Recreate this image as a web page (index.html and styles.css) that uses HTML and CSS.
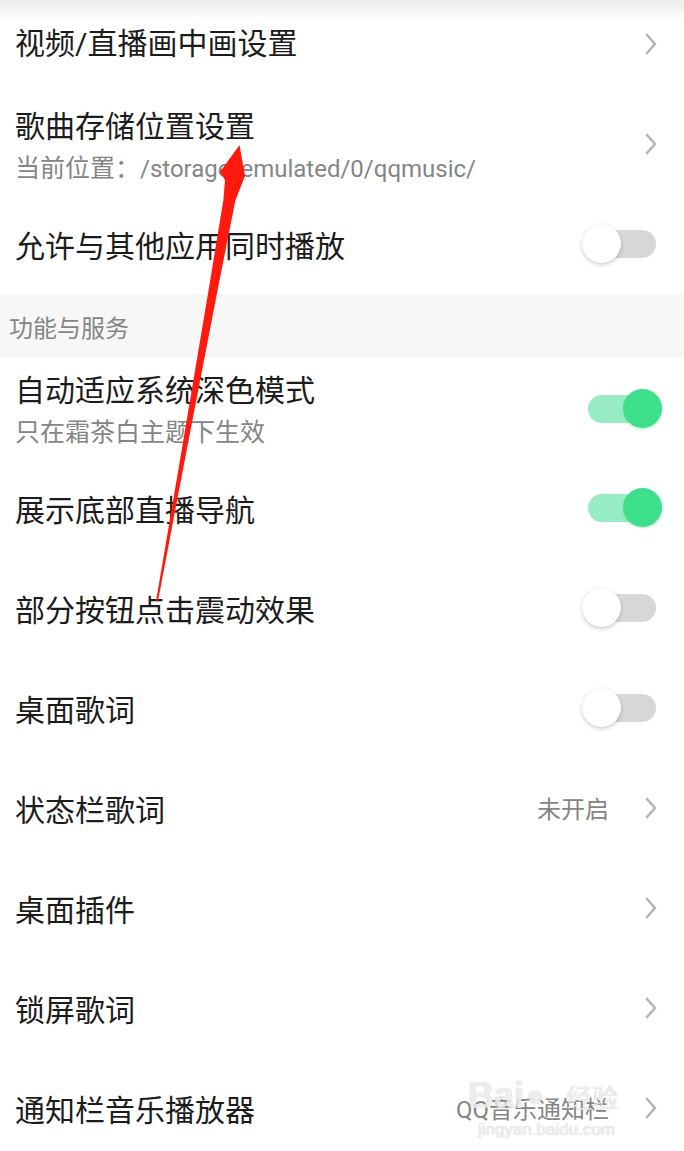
FILE: index.html
```html
<!DOCTYPE html>
<html lang="zh-CN">
<head>
<meta charset="utf-8">
<title>设置</title>
<link rel="stylesheet" href="styles.css">
</head>
<body>
<div class="page">
  <div class="list">
    <div class="row first">
      <div class="text"><div class="title">视频/直播画中画设置</div></div>
      <svg class="chev" width="14" height="22" viewBox="0 0 14 22"><path d="M3 2 L11 11 L3 20" /></svg>
    </div>
    <div class="row">
      <div class="text">
        <div class="title">歌曲存储位置设置</div>
        <div class="sub">当前位置：<span class="latin">/storage/emulated/0/qqmusic/</span></div>
      </div>
      <svg class="chev" width="14" height="22" viewBox="0 0 14 22"><path d="M3 2 L11 11 L3 20" /></svg>
    </div>
    <div class="row">
      <div class="text"><div class="title">允许与其他应用同时播放</div></div>
      <div class="toggle"><span class="track"></span><span class="thumb"></span></div>
    </div>
    <div class="section">功能与服务</div>
    <div class="row tall">
      <div class="text">
        <div class="title">自动适应系统深色模式</div>
        <div class="sub">只在霜茶白主题下生效</div>
      </div>
      <div class="toggle on"><span class="track"></span><span class="thumb"></span></div>
    </div>
    <div class="row">
      <div class="text"><div class="title">展示底部直播导航</div></div>
      <div class="toggle on"><span class="track"></span><span class="thumb"></span></div>
    </div>
    <div class="row">
      <div class="text"><div class="title">部分按钮点击震动效果</div></div>
      <div class="toggle"><span class="track"></span><span class="thumb"></span></div>
    </div>
    <div class="row">
      <div class="text"><div class="title">桌面歌词</div></div>
      <div class="toggle"><span class="track"></span><span class="thumb"></span></div>
    </div>
    <div class="row">
      <div class="text"><div class="title">状态栏歌词</div></div>
      <span class="value">未开启</span>
      <svg class="chev" width="14" height="22" viewBox="0 0 14 22"><path d="M3 2 L11 11 L3 20" /></svg>
    </div>
    <div class="row">
      <div class="text"><div class="title">桌面插件</div></div>
      <svg class="chev" width="14" height="22" viewBox="0 0 14 22"><path d="M3 2 L11 11 L3 20" /></svg>
    </div>
    <div class="row">
      <div class="text"><div class="title">锁屏歌词</div></div>
      <svg class="chev" width="14" height="22" viewBox="0 0 14 22"><path d="M3 2 L11 11 L3 20" /></svg>
    </div>
    <div class="row">
      <div class="text"><div class="title">通知栏音乐播放器</div></div>
      <span class="value">QQ音乐通知栏</span>
      <svg class="chev" width="14" height="22" viewBox="0 0 14 22"><path d="M3 2 L11 11 L3 20" /></svg>
    </div>
  </div>

  <div class="topshade"></div>

  <div class="watermark">
    <div class="wm-top"><span class="wm-bai">Bai</span><span class="wm-paw">●</span><span class="wm-jy">经验</span></div>
    <div class="wm-url">jingyan.baidu.com</div>
  </div>

  <svg class="arrow" width="684" height="1151" viewBox="0 0 684 1151">
    <polygon points="239.5,145 245,176 235.5,200 217.6,290 186.7,450 157.8,602 156.2,600 181.7,450 208.6,290 223.4,200 225,180 220,172" />
  </svg>
</div>
</body>
</html>
```

FILE: styles.css
```css
* {
  box-sizing: border-box;
}

html, body {
  margin: 0;
  padding: 0;
  background: #ffffff;
}

body {
  font-family: Roboto, "Noto Sans CJK SC", "Noto Sans", sans-serif;
  color: #1c1c1c;
}

.page {
  position: relative;
  width: 684px;
  height: 1151px;
  overflow: hidden;
  background: #ffffff;
}

.list {
  display: flex;
  flex-direction: column;
}

.row {
  display: flex;
  align-items: center;
  height: 100px;
  padding: 0 28px 0 15px;
}

.row .text {
  padding-top: 5px;
}

.row.first {
  height: 94px;
  padding-bottom: 7px;
}

.row.first .text {
  padding-top: 0;
}

.row.tall {
  height: 101px;
}

.text {
  flex: 1;
  min-width: 0;
}

.title {
  font-size: 30px;
  line-height: 36px;
  color: #1c1c1c;
  white-space: nowrap;
}

.sub {
  margin-top: 9px;
  font-size: 25px;
  line-height: 30px;
  color: #858585;
  white-space: nowrap;
}

.sub .latin {
  font-size: 24px;
}

.value {
  font-size: 24px;
  line-height: 30px;
  color: #858585;
  margin-right: 35px;
  padding-top: 3px;
}

.chev {
  flex: none;
  margin-right: -2px;
}

.chev path {
  fill: none;
  stroke: #b4b4b4;
  stroke-width: 2.6;
  stroke-linecap: round;
  stroke-linejoin: round;
}

.section {
  height: 63px;
  display: flex;
  align-items: center;
  padding-left: 9px;
  padding-top: 2px;
  background: #f7f7f7;
  font-size: 24px;
  color: #858585;
}

.toggle {
  position: relative;
  flex: none;
  width: 81px;
  height: 40px;
  margin-right: -6px;
}

.row.tall .toggle {
  margin-top: 2px;
}

.track {
  position: absolute;
  left: 7px;
  top: 6px;
  width: 68px;
  height: 28px;
  border-radius: 14px;
  background: #d7d7d7;
}

.thumb {
  position: absolute;
  left: 1px;
  top: 0;
  width: 39px;
  height: 39px;
  border-radius: 50%;
  background: #ffffff;
  box-shadow: 0 2px 4px rgba(0, 0, 0, 0.18), 0 0 1px rgba(0, 0, 0, 0.12);
}

.toggle.on .track {
  background: #98ecc3;
}

.toggle.on .thumb {
  left: 42px;
  background: #3ddf8c;
  box-shadow: 0 1px 3px rgba(61, 223, 140, 0.35);
}

.topshade {
  position: absolute;
  left: 0;
  top: 0;
  width: 684px;
  height: 19px;
  background: linear-gradient(#ececec, #f5f5f5 60%, rgba(255, 255, 255, 0));
}

.watermark {
  position: absolute;
  left: 468px;
  top: 1074px;
  width: 204px;
  color: rgba(255, 255, 255, 0.8);
  text-shadow: 0 0 1px rgba(0, 0, 0, 0.32);
  font-family: "Liberation Sans", "Noto Sans CJK SC", sans-serif;
  pointer-events: none;
}

.wm-top {
  display: flex;
  align-items: flex-end;
  height: 40px;
}

.wm-bai {
  font-size: 36px;
  font-weight: bold;
  line-height: 36px;
}

.wm-paw {
  font-size: 30px;
  line-height: 36px;
  margin: 0 2px;
}

.wm-jy {
  font-size: 26px;
  line-height: 30px;
  margin-left: 20px;
}

.wm-url {
  font-size: 17px;
  line-height: 20px;
  padding-left: 10px;
  margin-top: 6px;
}

.arrow {
  position: absolute;
  left: 0;
  top: 0;
  pointer-events: none;
}

.arrow polygon {
  fill: #ff1a0d;
}
```
